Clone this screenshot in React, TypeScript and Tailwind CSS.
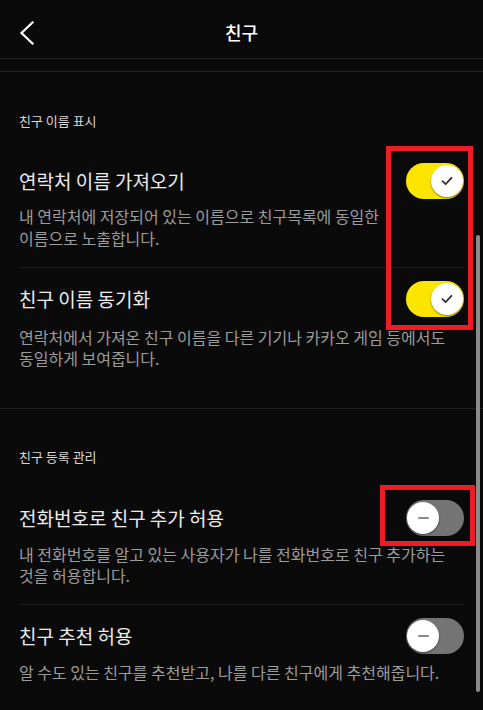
import type { ReactNode } from "react"

function Toggle({ on }: { on: boolean }) {
  return (
    <div
      className={`relative w-[58px] h-[36px] rounded-full shrink-0 ${on ? "bg-[#fee500]" : "bg-[#747474]"}`}
    >
      <div
        className={`absolute top-[2px] w-[32px] h-[32px] rounded-full bg-white shadow-[0_1px_2px_rgba(0,0,0,0.45)] flex items-center justify-center ${on ? "right-[1px]" : "left-[1px]"}`}
      >
        {on ? (
          <svg width="12" height="10" viewBox="0 0 12 10">
            <path d="M1.5 5.2 L4.6 8.2 L10.5 1.8" fill="none" stroke="#333" strokeWidth="1.8" strokeLinecap="round" strokeLinejoin="round" />
          </svg>
        ) : (
          <div className="w-[11px] h-[2px] bg-[#8a8a8a] rounded-full" />
        )}
      </div>
    </div>
  )
}

function Row({
  title,
  on,
  desc,
  pt,
  descMt,
  descLh,
  pb,
  divider,
}: {
  title: string
  on: boolean
  desc: ReactNode
  pt: string
  descMt: string
  descLh: string
  pb: string
  divider?: boolean
}) {
  return (
    <div className={`mx-[19px] ${pt} ${pb} ${divider ? "border-b border-[#1e1e1e]" : ""}`}>
      <div className="flex items-center justify-between h-[36px]">
        <span className="text-[19px] leading-[24px] text-[#ececec]">{title}</span>
        <Toggle on={on} />
      </div>
      <p className={`${descMt} ${descLh} text-[16px] whitespace-nowrap text-[#9c9c9c]`}>{desc}</p>
    </div>
  )
}

export default function App() {
  return (
    <div
      className="relative w-[483px] h-[710px] overflow-hidden bg-[#0a0a0a]"
      style={{ fontFamily: '"Noto Sans CJK KR", "Noto Sans", sans-serif' }}
    >
      <div className="relative h-[59px] flex items-center justify-center pt-[6px] border-b border-[#222]">
        <svg className="absolute left-[19px] top-[21px]" width="16" height="24" viewBox="0 0 16 24">
          <path d="M13.5 1.5 L2.5 12 L13.5 22.5" fill="none" stroke="#fff" strokeWidth="2.2" strokeLinecap="square" />
        </svg>
        <span className="text-[18px] font-medium text-white">친구</span>
      </div>
      <div className="h-[13px] border-b border-[#222]" />

      <div className="pt-[40px] px-[19px] text-[13px] leading-[18px] text-[#d6d6d6]">친구 이름 표시</div>
      <Row
        title="연락처 이름 가져오기"
        on
        pt="mt-[33px]"
        descMt="mt-[6px]"
        descLh="leading-[22px]"
        pb="pb-[18px]"
        divider
        desc={
          <>
            내 연락처에 저장되어 있는 이름으로 친구목록에 동일한
            <br />
            이름으로 노출합니다.
          </>
        }
      />
      <Row
        title="친구 이름 동기화"
        on
        pt="pt-[13px]"
        descMt="mt-[10px]"
        descLh="leading-[21px]"
        pb="pb-[39px]"
        desc={
          <>
            연락처에서 가져온 친구 이름을 다른 기기나 카카오 게임 등에서도
            <br />
            동일하게 보여줍니다.
          </>
        }
      />
      <div className="border-b border-[#1e1e1e]" />

      <div className="pt-[39px] px-[19px] text-[13px] leading-[18px] text-[#d6d6d6]">친구 등록 관리</div>
      <Row
        title="전화번호로 친구 추가 허용"
        on={false}
        pt="mt-[34px]"
        descMt="mt-[8px]"
        descLh="leading-[21px]"
        pb="pb-[18px]"
        divider
        desc={
          <>
            내 전화번호를 알고 있는 사용자가 나를 전화번호로 친구 추가하는
            <br />
            것을 허용합니다.
          </>
        }
      />
      <Row
        title="친구 추천 허용"
        on={false}
        pt="pt-[13px]"
        descMt="mt-[8px]"
        descLh="leading-[21px]"
        pb="pb-[18px]"
        desc="알 수도 있는 친구를 추천받고, 나를 다른 친구에게 추천해줍니다."
      />

      <div className="absolute left-[476px] top-[235px] w-[4px] h-[457px] rounded-full bg-[#8a8a8a]" />
      <div className="absolute left-[386px] top-[146px] w-[87px] h-[184px] border-[5px] border-[#ee1c25]" />
      <div className="absolute left-[380px] top-[485px] w-[95px] h-[61px] border-[5px] border-[#ee1c25]" />
    </div>
  )
}
